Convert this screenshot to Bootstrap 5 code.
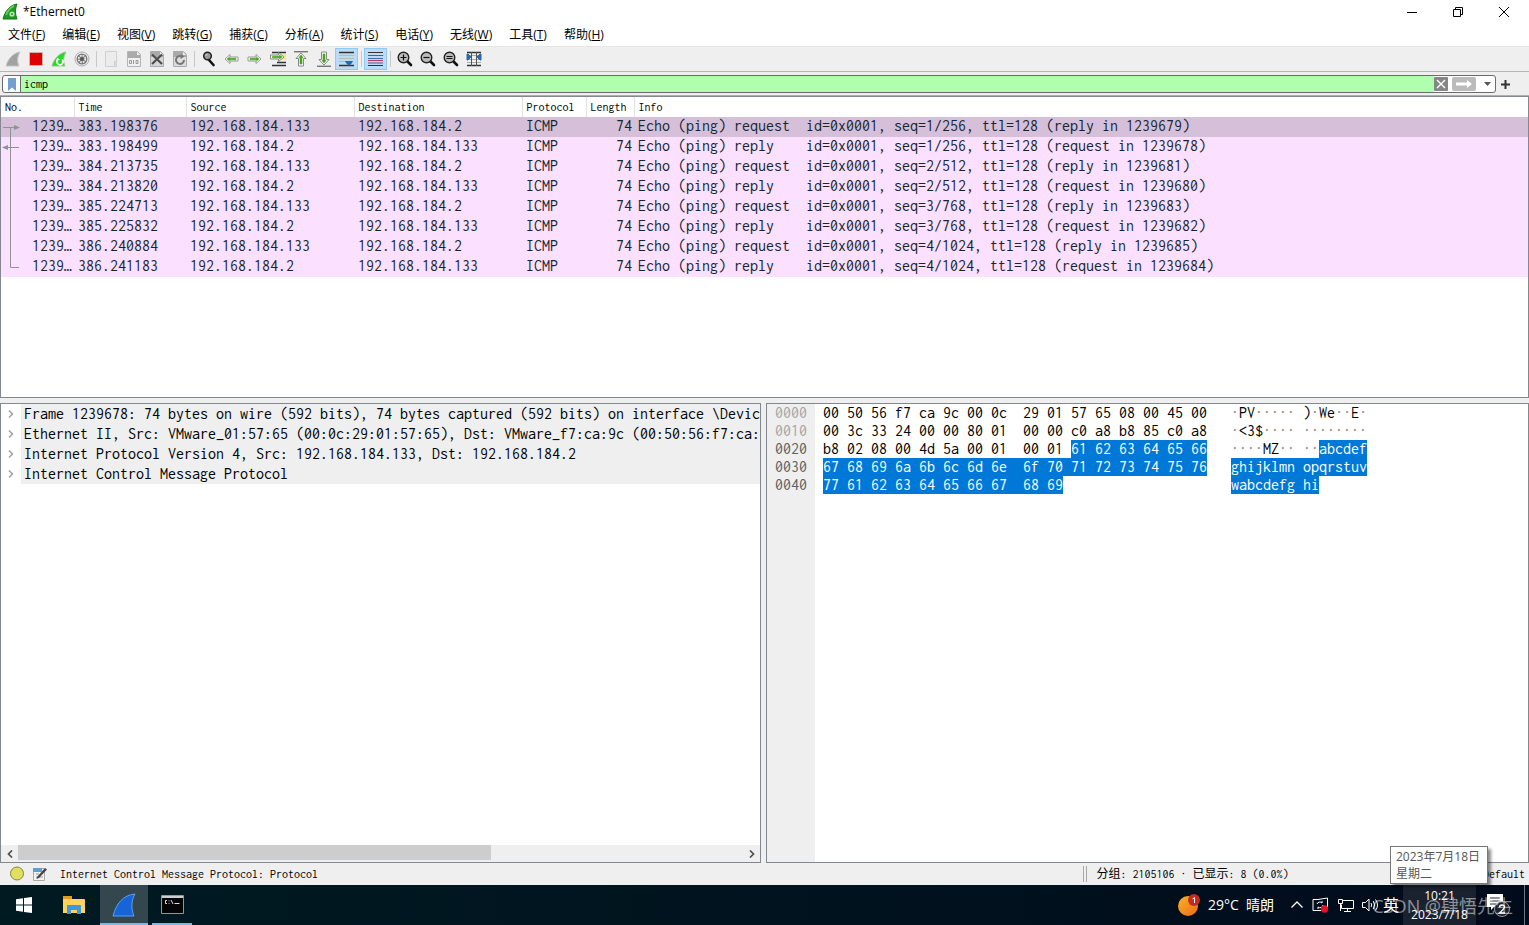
<!DOCTYPE html>
<html lang="zh-CN">
<head>
<meta charset="utf-8">
<meta name="viewport" content="width=device-width, initial-scale=1">
<title>*Ethernet0</title>
<link href="https://cdn.jsdelivr.net/npm/bootstrap@5.3.0/dist/css/bootstrap.min.css" rel="stylesheet">
<style>
:root{--frame:#828790;--chrome:#efefef;--ui:"Open Sans","Noto Sans CJK SC",sans-serif;--mono:Inconsolata,"Liberation Mono","Noto Sans CJK SC",monospace}
body{font-family:var(--ui);font-size:12px;line-height:18px;color:#000;background:var(--chrome);overflow:hidden}
button{font:inherit;color:inherit;background:none;border:0;padding:0}
svg{display:block;flex:none}
.song{font-family:var(--mono);font-size:12px}
.titlebar{height:23px;padding:0 2px}
.win-btn{width:46px;height:22px}
.menubar{height:23px}
.menubar a{color:#000;text-decoration:none;padding:0 9px 0 8px;line-height:24px;white-space:nowrap}
.tools{height:26px;border-top:1px solid #e6e6e6;border-bottom:1px solid #b4b4b4;padding-left:1px}
.tool-btn{width:23px;height:22px}
.tool-btn.is-on{background:#bcdcf4;border:1px solid #90c8f6}
.tool-sep{width:6px;height:16px;display:flex;justify-content:center}
.tool-sep::before{content:"";width:1px;background:#c9c9c9}
.filter-row{height:24px;padding:3px 0 2px 2px;border-bottom:1px solid #b0b0b0}
.filter-box{border:1px solid #6b6b6b;border-radius:3px;background:#fff;overflow:hidden}
.filter-box .bookmark{width:18px;border-right:1px solid #6b6b6b}
.filter-box input{border:0;outline:0;background:#afffaf;padding:0 0 0 3px;min-width:0}
.add-btn{width:33px;padding-left:5px}
.workspace{grid-template-rows:302fr 460fr;row-gap:5px}
.pane{border:1px solid var(--frame);background:#fff;overflow:hidden;min-width:0;min-height:0}
.packets{table-layout:fixed;width:100%;border-collapse:collapse}
.packets th{font:12px/20px var(--mono);height:20px;padding:0 0 0 4px;border-left:1px solid #e2e2e2}
.packets th:first-child{border:0}
.packets td{font:16px/18px var(--mono);height:20px;padding:0 0 0 4px;vertical-align:top;white-space:pre;overflow:hidden;color:#12272e;background:#fce0ff}
.packets .num{text-align:right;padding-right:2px}
.packets tr.is-sel td{background:#d6bfd9}
.links{left:0;top:20px}
.tree{list-style:none;margin:0;padding:0;font:16px/20px var(--mono)}
.tree li{display:flex;height:20px}
.tree button{width:20px;flex:none}
.tree span{background:var(--chrome);flex:1;padding-left:3px;overflow:hidden;white-space:nowrap}
.scroll-x{height:17px;background:var(--chrome)}
.scroll-x button{width:17px;height:17px}
.scroll-x .rail{flex:1}
.scroll-x .thumb{height:15px;background:#cdcdcd}
.hex{display:grid;grid-template-columns:48px 1fr;grid-template-rows:1fr}
.hex pre{margin:0;font:16px/18px var(--mono);overflow:hidden}
.hex .offsets{background:var(--chrome);color:#606060;padding-left:8px}
.hex .offsets i{font-style:normal;color:#a5a5a5}
.hex .bytes{padding-left:8px}
.hex .asc{padding-left:24px}
.hex b{font-weight:400;color:#fff;background:#0078d7;display:inline-block;height:18px;vertical-align:top}
.hex i{font-style:normal;color:#888}
.lower{display:grid;grid-template-columns:761fr 763fr;grid-template-rows:minmax(0,1fr);column-gap:5px;min-height:0}
.status{height:22px}
.status .msg{flex:0 0 auto;width:70.8%;padding-left:9px}
.status .msg span{padding-left:13px}
.status .grip{width:4px;height:16px;border:solid #a8a8a8;border-width:0 1px}
.status .counts{padding-left:10px}
.taskbar{height:40px;background:linear-gradient(90deg,#001a22,#00131e 50%,#020b1c);color:#fff}
.task-btn{width:48px;height:40px;display:flex;align-items:center;justify-content:center}
.task-btn.is-wide{width:52px}
.task-btn.is-active{background:#34474f}
.task-btn.is-running{box-shadow:inset 0 -2px #76b9ed}
.weather{font-size:14px}
.ime{font-size:16px}
.clock{width:73px;line-height:19px;background:#1a2230}
.tip{right:41px;bottom:41px;width:98px;border:1px solid #767676;background:#fff;color:#575757;padding:1px 5px;line-height:17px;box-shadow:3px 3px 3px #0007}
.watermark{right:16px;bottom:6px;font-size:18px;line-height:26px;color:#ffffff80;pointer-events:none;white-space:nowrap}
</style>
</head>
<body>
<div class="d-flex flex-column vh-100 position-relative">
  <header class="bg-white">
    <div class="titlebar d-flex align-items-center">
      <svg width="17" height="17" viewBox="0 0 17 17"><path d="M1 16C3 8 8 2 15 1C13 6 13 11 15 16Z" fill="#1f9a22" stroke="#0f7715"/><path d="M4 12C6 7 9 4 12 3" stroke="#60c95c" stroke-width="2" fill="none"/><circle cx="10" cy="11" r="2.6" fill="#b9e3b4"/><circle cx="10" cy="11" r="1.1" fill="#369b36"/></svg>
      <span class="ms-1 flex-grow-1">*Ethernet0</span>
      <button class="win-btn" aria-label="最小化"><svg class="m-auto" width="12" height="12"><path d="M1 6.500h10" stroke="#000"/></svg></button>
      <button class="win-btn" aria-label="还原"><svg class="m-auto" width="12" height="12" fill="none" stroke="#000"><path d="M1.500 3.500h7v7h-7zM3.500 3.500v-2h7v7h-2"/></svg></button>
      <button class="win-btn" aria-label="关闭"><svg class="m-auto" width="12" height="12"><path d="M1 1l10 10M11 1L1 11" stroke="#000"/></svg></button>
    </div>
    <nav class="menubar d-flex">
      <a href="#">文件(<u>F</u>)</a><a href="#">编辑(<u>E</u>)</a><a href="#">视图(<u>V</u>)</a><a href="#">跳转(<u>G</u>)</a><a href="#">捕获(<u>C</u>)</a><a href="#">分析(<u>A</u>)</a><a href="#">统计(<u>S</u>)</a><a href="#">电话(<u>Y</u>)</a><a href="#">无线(<u>W</u>)</a><a href="#">工具(<u>T</u>)</a><a href="#">帮助(<u>H</u>)</a>
    </nav>
  </header>

  <div class="tools d-flex align-items-center" role="toolbar">
    <button class="tool-btn" aria-label="开始捕获"><svg class="m-auto" width="16" height="16"><path d="M1 15C3 8 8 2 15 1C12 6 12 11 14 15Z" fill="#a2a2a2" stroke="#c4c4c4"/></svg></button>
    <button class="tool-btn" aria-label="停止捕获"><svg class="m-auto" width="14" height="14"><path d="M.5.5h13v13H.5z" fill="#fff" stroke="#d5b0b0"/><path d="M1 1h12v12H1z" fill="#e00000"/></svg></button>
    <button class="tool-btn" aria-label="重新开始"><svg class="m-auto" width="16" height="16"><path d="M1 15C3 8 8 2 15 1C12 6 12 11 14 15Z" fill="#22dc22" stroke="#8ec98e"/><path d="M11 8.500A3 3 0 1 1 6.500 9" fill="none" stroke="#fff" stroke-width="1.600"/><path d="M5 9.500l1.500-3 2.500 2.500z" fill="#fff"/></svg></button>
    <button class="tool-btn" aria-label="捕获选项"><svg class="m-auto" width="16" height="16"><circle cx="8" cy="8" r="7" fill="#f4f4f4" stroke="#aaa"/><circle cx="8" cy="8" r="5.500" fill="#777"/><circle cx="8" cy="8" r="3.300" fill="none" stroke="#eee" stroke-width="1.800" stroke-dasharray="1.700 .9"/><circle cx="8" cy="8" r="1.700" fill="#555"/></svg></button>
    <span class="tool-sep"></span>
    <button class="tool-btn" aria-label="打开"><svg class="m-auto" width="14" height="16"><path d="M1.500.5h11v10h-2v5h-9z" fill="#ececec" stroke="#d0d0d0"/><path d="M10.500 15.500v-5h2v5z" fill="#ddd" stroke="#d0d0d0"/></svg></button>
    <button class="tool-btn" aria-label="保存"><svg class="m-auto" width="14" height="16"><path d="M.5.5h10l3 3v12H.5z" fill="#f0f0f0" stroke="#b4b4b4"/><path d="M1 1h9l3 3v3H1z" fill="#aaa"/><path d="M10 1v3h3z" fill="#eee"/><path d="M2.500 9.500h2v3h-2zM6.500 9v4M9 9.500h2v3H9z" fill="none" stroke="#999"/></svg></button>
    <button class="tool-btn" aria-label="关闭文件"><svg class="m-auto" width="14" height="16"><path d="M.5.5h10l3 3v12H.5z" fill="#d6d6d6" stroke="#aaa"/><path d="M1 1h9l3 3v2H1z" fill="#aaa"/><path d="M10 1v3h3z" fill="#eee"/><path d="M2 3.500l10 9.500M12 3.500L2 13" stroke="#4d4d4d" stroke-width="2.200"/></svg></button>
    <button class="tool-btn" aria-label="重新加载"><svg class="m-auto" width="14" height="16"><path d="M.5.5h10l3 3v12H.5z" fill="#dedede" stroke="#aaa"/><path d="M1 1h9l3 3v2H1z" fill="#aaa"/><path d="M10 1v3h3z" fill="#eee"/><path d="M11 9A4 4 0 1 1 8.500 5.200" fill="none" stroke="#777" stroke-width="2"/><path d="M7.500 3l4 2.500-4 2.500z" fill="#777"/></svg></button>
    <span class="tool-sep"></span>
    <button class="tool-btn" aria-label="查找"><svg class="m-auto" width="14" height="16"><path d="M7 9l4.500 5" stroke="#111" stroke-width="2.600" stroke-linecap="round"/><circle cx="5.500" cy="5" r="3.800" fill="#999" stroke="#222" stroke-width="1.500"/><path d="M3.500 5l2-2" stroke="#ddd"/></svg></button>
    <button class="tool-btn" aria-label="后退"><svg class="m-auto" width="15" height="12"><path d="M1 6l5-4.500v2.500h8v4H6v2.500z" fill="#fff" stroke="#999"/><path d="M3 6l2.500-2v1.200H12v1.600H5.500V8z" fill="#47a51b" stroke="#47a51b" stroke-width=".5"/></svg></button>
    <button class="tool-btn" aria-label="前进"><svg class="m-auto" width="15" height="12"><path d="M14 6L9 1.500v2.500H1v4h8v2.500z" fill="#fff" stroke="#999"/><path d="M12 6L9.500 4v1.200H3v1.600h6.500V8z" fill="#47a51b" stroke="#47a51b" stroke-width=".5"/></svg></button>
    <button class="tool-btn" aria-label="转到分组"><svg class="m-auto" width="16" height="16"><path d="M2 1.500h14M7 11.500h9M2 14.500h14" stroke="#333" stroke-width="1.300"/><path d="M11 3.500h5v5h-5z" fill="#fbe46b"/><path d="M14 6L8.500 1.500V4H.5v4h8v2.500z" fill="#fff" stroke="#888"/><path d="M12 6L9.500 4v1.200h-7v1.600h7V8z" fill="#47a51b" stroke="#47a51b" stroke-width=".6"/></svg></button>
    <button class="tool-btn" aria-label="首个分组"><svg class="m-auto" width="16" height="16"><path d="M1 .8h14" stroke="#444"/><path d="M8 2L3 7.500h2.500V15h5V7.500H13z" fill="#fff" stroke="#888"/><path d="M8 4L6 6.500h1V13h2V6.500h1z" fill="#47a51b" stroke="#47a51b" stroke-width=".6"/></svg></button>
    <button class="tool-btn" aria-label="最后分组"><svg class="m-auto" width="16" height="16"><path d="M1 15.200h14" stroke="#444"/><path d="M8 14L3 8.500h2.500V1h5v7.500H13z" fill="#fff" stroke="#888"/><path d="M8 12L6 9.500h1V3h2v6.500h1z" fill="#47a51b" stroke="#47a51b" stroke-width=".6"/></svg></button>
    <button class="tool-btn is-on" aria-label="自动滚动"><svg class="m-auto" width="15" height="16"><path d="M0 1.500h15M0 14.500h15" stroke="#333" stroke-width="1.400"/><path d="M0 4.500h15M0 7.500h15M0 10.500h9" stroke="#b4bdb4"/><path d="M6 10h8l-1 2-3 3-3-3z" fill="#2f65ae"/></svg></button>
    <span class="tool-sep"></span>
    <button class="tool-btn is-on" aria-label="着色"><svg class="m-auto" width="15" height="16"><path d="M0 1.500h15M0 14.500h15" stroke="#333"/><path d="M0 4.500h15" stroke="#e22"/><path d="M0 7.500h15" stroke="#3a6bb5"/><path d="M0 9.500h15" stroke="#b33a6b"/><path d="M0 12h15" stroke="#75507b"/></svg></button>
    <span class="tool-sep"></span>
    <button class="tool-btn" aria-label="放大"><svg class="m-auto" width="16" height="16"><path d="M10 10l4 4" stroke="#111" stroke-width="2.600" stroke-linecap="round"/><circle cx="6.500" cy="6.500" r="5.300" fill="#bbb" stroke="#222" stroke-width="1.400"/><path d="M3.500 6.500h6M6.500 3.500v6" stroke="#111" stroke-width="1.200"/></svg></button>
    <button class="tool-btn" aria-label="缩小"><svg class="m-auto" width="16" height="16"><path d="M10 10l4 4" stroke="#111" stroke-width="2.600" stroke-linecap="round"/><circle cx="6.500" cy="6.500" r="5.300" fill="#bbb" stroke="#222" stroke-width="1.400"/><path d="M3.500 6.500h6" stroke="#111" stroke-width="1.200"/></svg></button>
    <button class="tool-btn" aria-label="普通大小"><svg class="m-auto" width="16" height="16"><path d="M10 10l4 4" stroke="#111" stroke-width="2.600" stroke-linecap="round"/><circle cx="6.500" cy="6.500" r="5.300" fill="#bbb" stroke="#222" stroke-width="1.400"/><path d="M3.500 5.500h6M3.500 7.500h6" stroke="#111"/></svg></button>
    <button class="tool-btn" aria-label="调整列宽"><svg class="m-auto" width="16" height="16"><path d="M1 1.500h14M1 14.500h14" stroke="#333" stroke-width="1.400"/><path d="M1 4.500h14M1 8.500h14M1 11.500h14" stroke="#aaa"/><path d="M5.500 1v14M10.500 1v14" stroke="#555"/><path d="M1 3h1l3 3-3 3H1zM15 3h-1l-3 3 3 3h1z" fill="#2f65ae" stroke="#2f65ae"/></svg></button>
  </div>

  <div class="filter-row d-flex">
    <div class="filter-box d-flex flex-grow-1">
      <button class="bookmark" aria-label="书签"><svg class="m-auto" width="8" height="13"><path d="M0 0h8v13L4 9.500 0 13z" fill="#729fcf"/></svg></button>
      <input class="song flex-grow-1" type="text" value="icmp" aria-label="显示过滤器">
      <button aria-label="清除"><svg width="14" height="14"><rect width="14" height="14" rx="1" fill="#868686"/><path d="M3 3l8 8M11 3l-8 8" stroke="#fff" stroke-width="1.400"/></svg></button>
      <button aria-label="应用"><svg class="mx-1" width="24" height="14"><rect width="24" height="14" rx="2" fill="#bbb"/><path d="M4 5.500h11V3l5 4-5 4V8.500H4z" fill="#fff"/></svg></button>
      <button aria-label="历史"><svg class="mx-1" width="7" height="4"><path d="M0 0h7L3.500 4z" fill="#555"/></svg></button>
    </div>
    <button class="add-btn" aria-label="添加"><svg width="9" height="9"><path d="M4.500 0v9M0 4.500h9" stroke="#333" stroke-width="2"/></svg></button>
  </div>

  <main class="workspace d-grid flex-grow-1">
    <section class="pane position-relative">
      <table class="packets">
        <colgroup><col style="width:73px"><col style="width:112px"><col style="width:168px"><col style="width:168px"><col style="width:64px"><col style="width:48px"><col></colgroup>
        <thead><tr><th>No.</th><th>Time</th><th>Source</th><th>Destination</th><th>Protocol</th><th>Length</th><th>Info</th></tr></thead>
        <tbody>
        <tr class="is-sel"><td class="num">1239…</td><td>383.198376</td><td>192.168.184.133</td><td>192.168.184.2</td><td>ICMP</td><td class="num">74</td><td>Echo (ping) request  id=0x0001, seq=1/256, ttl=128 (reply in 1239679)</td></tr>
        <tr><td class="num">1239…</td><td>383.198499</td><td>192.168.184.2</td><td>192.168.184.133</td><td>ICMP</td><td class="num">74</td><td>Echo (ping) reply    id=0x0001, seq=1/256, ttl=128 (request in 1239678)</td></tr>
        <tr><td class="num">1239…</td><td>384.213735</td><td>192.168.184.133</td><td>192.168.184.2</td><td>ICMP</td><td class="num">74</td><td>Echo (ping) request  id=0x0001, seq=2/512, ttl=128 (reply in 1239681)</td></tr>
        <tr><td class="num">1239…</td><td>384.213820</td><td>192.168.184.2</td><td>192.168.184.133</td><td>ICMP</td><td class="num">74</td><td>Echo (ping) reply    id=0x0001, seq=2/512, ttl=128 (request in 1239680)</td></tr>
        <tr><td class="num">1239…</td><td>385.224713</td><td>192.168.184.133</td><td>192.168.184.2</td><td>ICMP</td><td class="num">74</td><td>Echo (ping) request  id=0x0001, seq=3/768, ttl=128 (reply in 1239683)</td></tr>
        <tr><td class="num">1239…</td><td>385.225832</td><td>192.168.184.2</td><td>192.168.184.133</td><td>ICMP</td><td class="num">74</td><td>Echo (ping) reply    id=0x0001, seq=3/768, ttl=128 (request in 1239682)</td></tr>
        <tr><td class="num">1239…</td><td>386.240884</td><td>192.168.184.133</td><td>192.168.184.2</td><td>ICMP</td><td class="num">74</td><td>Echo (ping) request  id=0x0001, seq=4/1024, ttl=128 (reply in 1239685)</td></tr>
        <tr><td class="num">1239…</td><td>386.241183</td><td>192.168.184.2</td><td>192.168.184.133</td><td>ICMP</td><td class="num">74</td><td>Echo (ping) reply    id=0x0001, seq=4/1024, ttl=128 (request in 1239684)</td></tr>
        </tbody>
      </table>
      <svg class="links position-absolute" width="20" height="160" fill="none" stroke="#8a9496"><path d="M2 10.500h12M6 30.500h12M9.500 10v140.500H18"/><path d="M13 8l6 2.500-6 2.500zM7 28l-6 2.500 6 2.500z" fill="#8a9496" stroke="none"/></svg>
    </section>

    <div class="lower">
      <section class="pane d-flex flex-column">
        <ul class="tree flex-grow-1">
          <li><button aria-label="展开"><svg class="m-auto" width="6" height="8" fill="none" stroke="#a0a0a0" stroke-width="1.500"><path d="M1 .5L4.500 4 1 7.500"/></svg></button><span>Frame 1239678: 74 bytes on wire (592 bits), 74 bytes captured (592 bits) on interface \Devic</span></li>
          <li><button aria-label="展开"><svg class="m-auto" width="6" height="8" fill="none" stroke="#a0a0a0" stroke-width="1.500"><path d="M1 .5L4.500 4 1 7.500"/></svg></button><span>Ethernet II, Src: VMware_01:57:65 (00:0c:29:01:57:65), Dst: VMware_f7:ca:9c (00:50:56:f7:ca:</span></li>
          <li><button aria-label="展开"><svg class="m-auto" width="6" height="8" fill="none" stroke="#a0a0a0" stroke-width="1.500"><path d="M1 .5L4.500 4 1 7.500"/></svg></button><span>Internet Protocol Version 4, Src: 192.168.184.133, Dst: 192.168.184.2</span></li>
          <li><button aria-label="展开"><svg class="m-auto" width="6" height="8" fill="none" stroke="#a0a0a0" stroke-width="1.500"><path d="M1 .5L4.500 4 1 7.500"/></svg></button><span>Internet Control Message Protocol</span></li>
        </ul>
        <div class="scroll-x d-flex">
          <button aria-label="向左滚动"><svg class="m-auto" width="6" height="8" fill="none" stroke="#505050" stroke-width="1.700"><path d="M5 .5L1.500 4 5 7.500"/></svg></button>
          <div class="rail"><div class="thumb" style="width:65.3%"></div></div>
          <button aria-label="向右滚动"><svg class="m-auto" width="6" height="8" fill="none" stroke="#505050" stroke-width="1.700"><path d="M1 .5L4.500 4 1 7.500"/></svg></button>
        </div>
      </section>
      <section class="pane hex">
<pre class="offsets"><i>0000</i>
<i>0010</i>
0020
0030
0040</pre>
        <div class="d-flex">
<pre class="bytes">00 50 56 f7 ca 9c 00 0c  29 01 57 65 08 00 45 00
00 3c 33 24 00 00 80 01  00 00 c0 a8 b8 85 c0 a8
b8 02 08 00 4d 5a 00 01  00 01 <b>61 62 63 64 65 66</b>
<b>67 68 69 6a 6b 6c 6d 6e  6f 70 71 72 73 74 75 76</b>
<b>77 61 62 63 64 65 66 67  68 69</b></pre>
<pre class="asc"><i>·</i>PV<i>·····</i> )<i>·</i>We<i>··</i>E<i>·</i>
<i>·</i>&lt;3$<i>····</i> <i>········</i>
<i>····</i>MZ<i>··</i> <i>··</i><b>abcdef</b>
<b>ghijklmn opqrstuv</b>
<b>wabcdefg hi</b></pre>
        </div>
      </section>
    </div>
  </main>

  <footer class="status song d-flex align-items-center">
    <div class="msg d-flex align-items-center">
      <svg width="16" height="16"><circle cx="8" cy="7.500" r="6.500" fill="#dfdf62" stroke="#85853f"/></svg>
      <svg class="ms-2" width="14" height="16"><path d="M.5 2.500h11v12H.5z" fill="#f2f2f2" stroke="#aaa"/><path d="M0 2h9v4H0z" fill="#5da0cf"/><path d="M3 8h3M3 11h7" stroke="#999"/><path d="M4 11L12 2l2 1.500-8 8.500-2.500 1z" fill="#444"/></svg>
      <span>Internet Control Message Protocol: Protocol</span>
    </div>
    <div class="grip"></div>
    <div class="counts flex-grow-1 text-nowrap">分组: 2105106 · 已显示: 8 (0.0%)</div>
    <div class="pe-1 text-nowrap">配置: Default</div>
  </footer>

  <div class="taskbar d-flex align-items-center">
    <button class="task-btn" aria-label="开始"><svg width="16" height="16" fill="#fff"><path d="M0 2.200L7 1.200V7.500H0zM8 1L16 0V7.500H8zM0 8.500h7v6.300L0 13.800zM8 8.500h8V16L8 15z"/></svg></button>
    <button class="task-btn is-wide" aria-label="文件资源管理器"><svg width="22" height="18"><path d="M0 1q0-1 1-1h8v3h12q1 0 1 1v13H0z" fill="#ffd35c"/><path d="M0 1q0-1 1-1h8v3H0z" fill="#e39c1c"/><path d="M4 9h14v9h-4v-4H8v4H4z" fill="#3d98dc"/></svg></button>
    <button class="task-btn is-active is-running" aria-label="Wireshark"><svg width="24" height="24"><path d="M1 23C4 11 11 2 23 1C19 8 19 16 22 23Z" fill="#1763d8" stroke="#5ba0f2"/></svg></button>
    <button class="task-btn px-1" aria-label="命令提示符"><span class="task-btn is-running flex-grow-1"><svg width="23" height="20"><path d="M.5.5h22v18H.5z" fill="#050505" stroke="#8e9699"/><path d="M1 1h21v2H1z" fill="#c8d0d4"/><path d="M6 5.500H4.500v3H6M8 5.500v.8M8 8v.8M10 5l2 4M13.500 8.500h5" stroke="#ddd" fill="none"/></svg></span></button>
    <div class="weather d-flex align-items-center ms-auto">
      <svg class="me-2" width="22" height="22"><defs><linearGradient id="sun" y2="1"><stop stop-color="#f7b52c"/><stop offset="1" stop-color="#ef6911"/></linearGradient></defs><circle cx="10" cy="12" r="10" fill="url(#sun)"/><circle cx="16" cy="6" r="6" fill="#c42b1c"/><path d="M14.500 5l2-1.500V9" stroke="#fff" fill="none"/></svg>
      <span>29°C&nbsp; 晴朗</span>
    </div>
    <div class="d-flex align-items-center gap-2 ps-3">
      <svg width="14" height="14" fill="none" stroke="#fff" stroke-width="1.300"><path d="M1.500 9.500L7 4l5.500 5.500"/></svg>
      <svg width="17" height="16" fill="none" stroke="#fff"><path d="M6 2.500H1v11h9M6 2.500L15.500 1v11"/><path d="M5 7a3 3 0 0 1 5-1V4M11 8a3 3 0 0 1-5 2v2"/><circle cx="12.500" cy="12" r="3.700" fill="#e81123" stroke="none"/></svg>
      <svg width="17" height="16" fill="none" stroke="#fff"><path d="M5.500 3.500h11v8h-12v-4M7 14.500h7M10.500 12v2.500M1.500 2.500h4v4h-4zM3.500 6.500V14"/></svg>
      <svg width="17" height="16" fill="none" stroke="#fff"><path d="M.5 5.500h3L7 2v12l-3.500-3.500h-3zM9 6q1.500 2 0 4M11.200 4q3 4 0 8M13.500 2.500q4 5.500 0 11"/></svg>
    </div>
    <span class="ime ps-1">英</span>
    <button class="clock h-100 ms-1">10:21<br>2023/7/18</button>
    <button class="task-btn pe-1" aria-label="通知"><svg width="24" height="24"><path d="M1 1h16v13H8l-3 3v-3H1z" fill="#fff"/><path d="M4 5h10M4 8h10M4 11h6" stroke="#222c3a"/><circle cx="16" cy="16" r="7.500" fill="#1c2430" stroke="#999"/><path d="M13.500 14.500q0-2.500 2.500-2.500t2.500 2q0 1.500-5 6H19" fill="none" stroke="#fff" stroke-width="1.300"/></svg></button>
    <span class="border-start border-secondary h-100 ps-1"></span>
  </div>
  <div class="tip position-absolute" role="tooltip">2023年7月18日<br>星期二</div>
  <div class="watermark position-absolute">CSDN @肆悟先生</div>
</div>
<script src="https://cdn.jsdelivr.net/npm/bootstrap@5.3.0/dist/js/bootstrap.bundle.min.js"></script>
</body>
</html>
